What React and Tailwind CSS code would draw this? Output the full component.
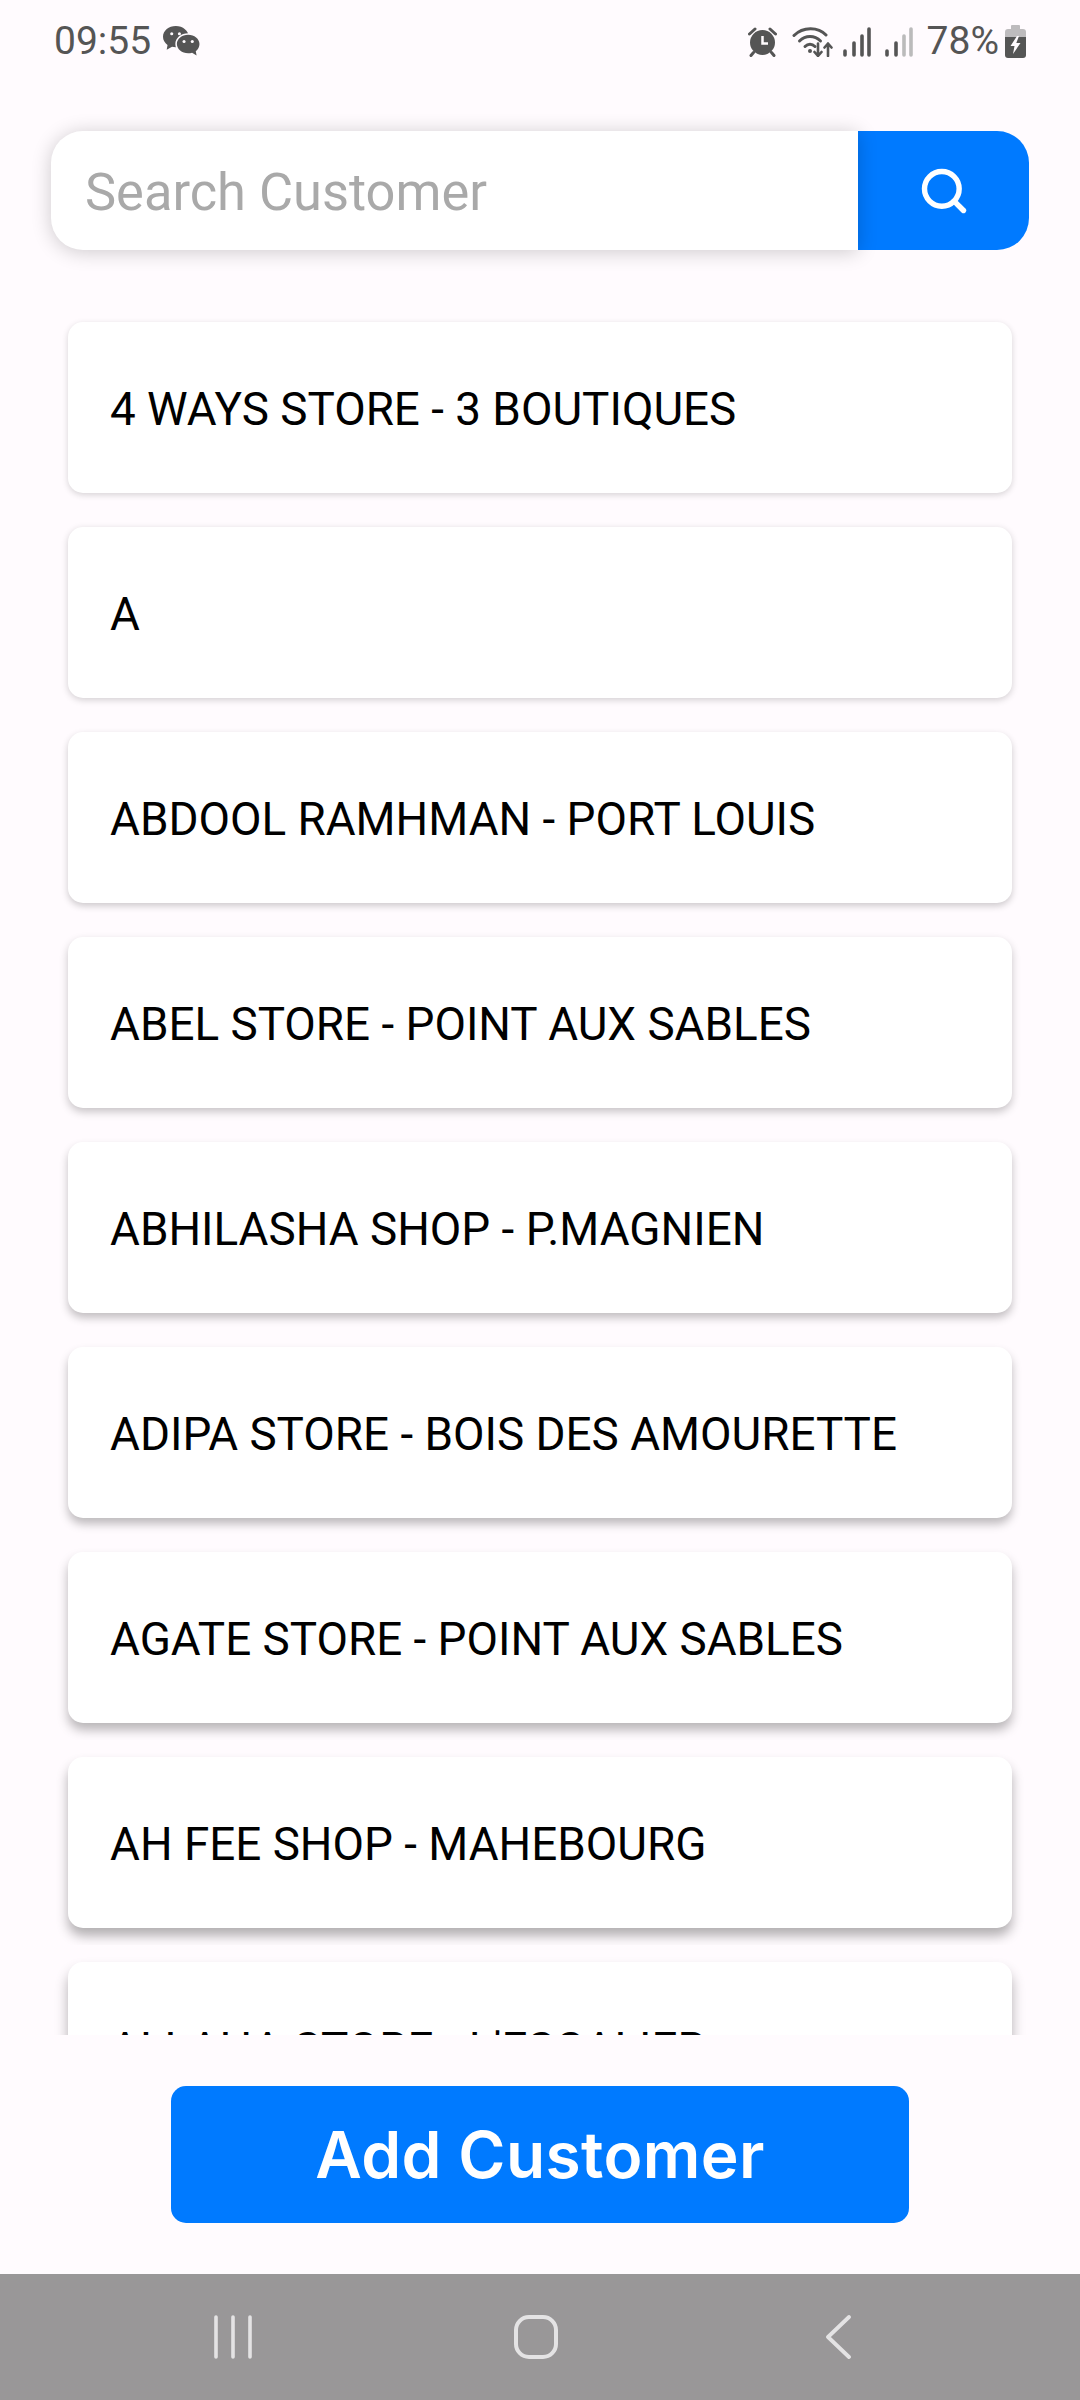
import React from "react";
import { Search } from "lucide-react";

const customers = [
    { name: "4 WAYS STORE - 3 BOUTIQUES", shadow: "shadow-[0_2px_6px_rgba(0,0,0,0.16)]" },
    { name: "A", shadow: "shadow-[0_2px_7px_rgba(0,0,0,0.18)]" },
    { name: "ABDOOL RAMHMAN - PORT LOUIS", shadow: "shadow-[0_3px_7px_rgba(0,0,0,0.2)]" },
    { name: "ABEL STORE - POINT AUX SABLES", shadow: "shadow-[0_4px_8px_rgba(0,0,0,0.22)]" },
    { name: "ABHILASHA SHOP - P.MAGNIEN", shadow: "shadow-[0_5px_9px_rgba(0,0,0,0.24)]" },
    { name: "ADIPA STORE - BOIS DES AMOURETTE", shadow: "shadow-[0_6px_10px_rgba(0,0,0,0.26)]" },
    { name: "AGATE STORE - POINT AUX SABLES", shadow: "shadow-[0_7px_11px_rgba(0,0,0,0.28)]" },
    { name: "AH FEE SHOP - MAHEBOURG", shadow: "shadow-[0_8px_12px_rgba(0,0,0,0.3)]" },
    { name: "ALLAHA STORE - L'ESCALIER", shadow: "shadow-[0_9px_13px_rgba(0,0,0,0.3)]" },
];

function WeChatIcon() {
    return (
        <svg width="38" height="32" viewBox="0 0 37 31" className="text-[#555]">
            <path fill="currentColor" d="M12.5 0C5.6 0 0 4.6 0 10.400c0 3.200 1.700 6 4.400 7.900L3.600 23l5.200-2.800c1.200.3 2.400.4 3.700.4 6.900 0 12.500-4.600 12.500-10.200S19.400 0 12.500 0z" />
            <path fill="#fffbfe" d="M24.500 7C17.600 7 12 11.600 12 17.500s5.600 10.500 12.500 10.500c1.300 0 2.600-.2 3.800-.5l5.700 3.500-1-5.300c2.500-1.900 4-4.700 4-7.700C37 11.600 31.400 7 24.500 7z" />
            <path fill="currentColor" d="M24.500 8.500c-6 0-11 4-11 9s5 9 11 9c1.300 0 2.600-.2 3.800-.6l4.400 2.800-.8-4.300c2.300-1.700 3.600-4.200 3.600-6.900 0-5-5-9-11-9z" />
            <circle cx="8.500" cy="7.500" r="1.500" fill="#fffbfe" />
            <circle cx="16" cy="7.500" r="1.500" fill="#fffbfe" />
            <circle cx="20.500" cy="15" r="1.500" fill="#fffbfe" />
            <circle cx="28.500" cy="15" r="1.500" fill="#fffbfe" />
        </svg>
    );
}

function AlarmIcon() {
    return (
        <svg width="29" height="30" viewBox="0 0 29 30" className="text-[#555]">
            <circle cx="14.500" cy="15.500" r="12.500" fill="currentColor" />
            <path d="M1.500 7 7 2M27.500 7 22 2M5.500 25.500 3 28.500M23.500 25.500 26 28.500" stroke="currentColor" strokeWidth="3" strokeLinecap="round" />
            <path d="M14.500 9v7.500H20" stroke="#fffbfe" strokeWidth="2.500" fill="none" />
        </svg>
    );
}

function WifiIcon() {
    return (
        <svg width="42" height="31" viewBox="0 0 42 31" fill="none" stroke="#555" strokeLinecap="round" strokeLinejoin="round">
            <path d="M2 9.500C11 .5 26 .5 34 9" strokeWidth="3" />
            <path d="M7.500 15c6-6 15-6 21 0" strokeWidth="3" />
            <path d="M13 20.500c3-3 7-3 10 0" strokeWidth="3" />
            <circle cx="18" cy="25" r="2" fill="#555" stroke="none" />
            <path d="M26 17.500V30M22.500 26l3.500 4 3.500-4M36 30V17.500M32.500 21.500l3.500-4 3.500 4" strokeWidth="2.600" />
        </svg>
    );
}

function SignalIcon({ dim }) {
    return (
        <svg width="28" height="30" viewBox="0 0 28 30" strokeWidth="3.600" strokeLinecap="round">
            <path d="M2 24v4" stroke="#555" />
            <path d="M11 16v12" stroke="#555" />
            <path d="M19 9v19" stroke={dim ? "#bbb" : "#555"} />
            <path d="M26 2v26" stroke={dim ? "#bbb" : "#555"} />
        </svg>
    );
}

function BatteryIcon() {
    return (
        <svg width="21" height="33" viewBox="0 0 21 33">
            <path fill="#bdbbbd" d="M7 0h7a1 1 0 0 1 1 1v3h3a3 3 0 0 1 3 3v8H0V7a3 3 0 0 1 3-3h3V1a1 1 0 0 1 1-1z" />
            <path fill="#555" d="M0 12h21v18a3 3 0 0 1-3 3H3a3 3 0 0 1-3-3z" />
            <path fill="#fffbfe" d="M12 11 5.500 21h4L8 29l7.500-11h-4.200L14 11z" />
        </svg>
    );
}

function StatusBar() {
    return (
        <div className="h-[80px] pt-[3px] flex items-center justify-between pl-[54px] pr-[54px] text-[#555] text-[39px] leading-none font-['Roboto',sans-serif]">
            <div className="flex items-center gap-[12px]">
                <span>09:55</span>
                <WeChatIcon />
            </div>
            <div className="flex items-center">
                <AlarmIcon />
                <div className="ml-[15px]"><WifiIcon /></div>
                <div className="ml-[9px]"><SignalIcon /></div>
                <div className="ml-[14px]"><SignalIcon dim /></div>
                <span className="ml-[14px]">78%</span>
                <div className="ml-[6px]"><BatteryIcon /></div>
            </div>
        </div>
    );
}

function SearchBar() {
    return (
        <div className="mx-[51px] mt-[51px] h-[119px] flex">
            <input
                type="text"
                placeholder="Search Customer"
                className="relative z-10 flex-1 min-w-0 h-full bg-white rounded-l-[32px] pl-[34px] pt-[3px] text-[52.4px] font-['Roboto',sans-serif] placeholder:text-[#a9a9a9] outline-none shadow-[0_2px_20px_rgba(0,0,0,0.2)]"
            />
            <button type="button" className="w-[171px] h-full bg-[#007aff] rounded-r-[32px] flex items-center justify-center">
                <Search size={52} color="#fff" strokeWidth={2.5} />
            </button>
        </div>
    );
}

function NavBar() {
    return (
        <div className="h-[126px] bg-[#999798] flex items-center justify-between pl-[203px] pr-[212px]">
            <svg width="60" height="44" viewBox="0 0 60 44" stroke="#e4e3e4" strokeWidth="3.600" strokeLinecap="round">
                <path d="M13 2v40M30 2v40M47 2v40" />
            </svg>
            <svg width="60" height="44" viewBox="0 0 60 44" fill="none" stroke="#e4e3e4" strokeWidth="4">
                <rect x="10" y="2" width="40" height="40" rx="13" />
            </svg>
            <svg width="60" height="44" viewBox="0 0 60 44" fill="none" stroke="#e4e3e4" strokeWidth="3.800" strokeLinecap="round" strokeLinejoin="round">
                <path d="M41 2 20 22l21 20" />
            </svg>
        </div>
    );
}

export default function App() {
    return (
        <div className="h-[2400px] w-[1080px] flex flex-col bg-[#fffbfe] overflow-hidden">
            <StatusBar />
            <SearchBar />

            <div className="mt-[55px] flex-1 min-h-0 overflow-hidden">
                {customers.map((c) => (
                    <div key={c.name} className="mx-[60px] px-[8px] py-[17px] bg-[#fffbfe]">
                        <div className={`h-[171px] bg-white rounded-[15px] flex items-center pl-[42px] pt-[5px] text-black text-[45.8px] font-['Roboto',sans-serif] ${c.shadow}`}>
                            {c.name}
                        </div>
                    </div>
                ))}
            </div>

            <div className="h-[239px] pt-[51px]">
                <button
                    type="button"
                    className="mx-auto w-[738px] h-[137px] block bg-[#007aff] rounded-[15px] text-white text-[64px] tracking-[0.4px] font-semibold font-['Inter',sans-serif]"
                >
                    Add Customer
                </button>
            </div>

            <NavBar />
        </div>
    );
}
